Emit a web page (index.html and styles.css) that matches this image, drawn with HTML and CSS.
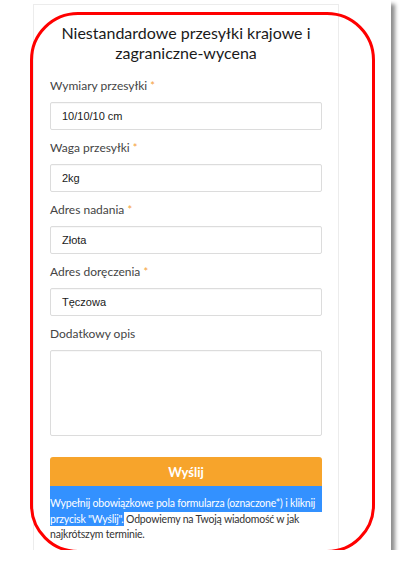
FILE: index.html
```html
<!DOCTYPE html>
<html lang="pl">
<head>
<meta charset="utf-8">
<link rel="stylesheet" href="styles.css">
</head>
<body>
<div class="sheet">
  <div class="card">
    <h1 class="title">Niestandardowe przesyłki krajowe i zagraniczne-wycena</h1>
    <div class="field">
      <label class="label">Wymiary przesyłki <span class="req">*</span></label>
      <div class="input">10/10/10 cm</div>
    </div>
    <div class="field">
      <label class="label">Waga przesyłki <span class="req">*</span></label>
      <div class="input">2kg</div>
    </div>
    <div class="field">
      <label class="label">Adres nadania <span class="req">*</span></label>
      <div class="input">Złota</div>
    </div>
    <div class="field">
      <label class="label">Adres doręczenia <span class="req">*</span></label>
      <div class="input">Tęczowa</div>
    </div>
    <div class="field">
      <label class="label">Dodatkowy opis</label>
      <div class="input textarea"></div>
    </div>
    <div class="button">Wyślij</div>
    <p class="note"><span class="sel-block">Wypełnij obowiązkowe pola formularza (oznaczone*) i kliknij</span><span class="sel">przycisk "Wyślij".</span> Odpowiemy na Twoją wiadomość w jak<br>najkrótszym terminie.</p>
  </div>
  <div class="annotation"></div>
</div>
</body>
</html>
```
FILE: styles.css
```css
* { box-sizing: border-box; }
html, body { margin: 0; padding: 0; background: #fff; }
body { font-family: Lato, "Noto Sans", sans-serif; }

.sheet {
  position: relative;
  width: 391px;
  height: 550px;
  background: #fff;
  overflow: hidden;
  box-shadow: 4px 4px 4px rgba(0, 0, 0, 0.45);
}

.card {
  margin: 4px 0 0 33px;
  width: 306px;
  min-height: 600px;
  border: 1px solid #ececec;
  background: #fff;
  padding: 18px 16px 0 16px;
}

.title {
  margin: 0 0 14px;
  font-size: 16px;
  line-height: 20px;
  font-weight: 400;
  color: #1a1a1a;
  text-align: center;
}

.field { display: flex; flex-direction: column; gap: 7px; margin-bottom: 9px; }

.label {
  display: block;
  height: 18px;
  font-size: 12px;
  line-height: 18px;
  color: #444;
}
.req { color: #f5a13a; font-size: 11px; line-height: 0; }

.input {
  height: 28px;
  border: 1px solid #dcdcdc;
  border-radius: 2px;
  padding: 0 11px;
  display: flex;
  align-items: center;
  font-family: "Liberation Sans", Arial, sans-serif;
  font-size: 11px;
  color: #1a1a1a;
  box-shadow: inset 0 1px 1px rgba(0,0,0,0.03);
}
.textarea { height: 86px; }

.button {
  margin-top: 21px;
  height: 29px;
  background: #f7a42b;
  border-radius: 3px 3px 0 0;
  color: #fff;
  font-weight: 700;
  font-size: 13px;
  display: flex;
  align-items: center;
  justify-content: center;
}

.note {
  margin: 0;
  font-size: 10.5px;
  letter-spacing: -0.2px;
  line-height: 15.5px;
  color: #333;
  white-space: nowrap;
}
.sel-block {
  display: block;
  padding-top: 10px;
  background: #3391ff;
  color: #fff;
}
.sel {
  background: #3391ff;
  color: #fff;
  padding: 1px 0;
}

.annotation {
  position: absolute;
  left: 30px;
  top: 12px;
  width: 345px;
  height: 541px;
  border: 3px solid #f00;
  border-radius: 48px;
  pointer-events: none;
}
```
